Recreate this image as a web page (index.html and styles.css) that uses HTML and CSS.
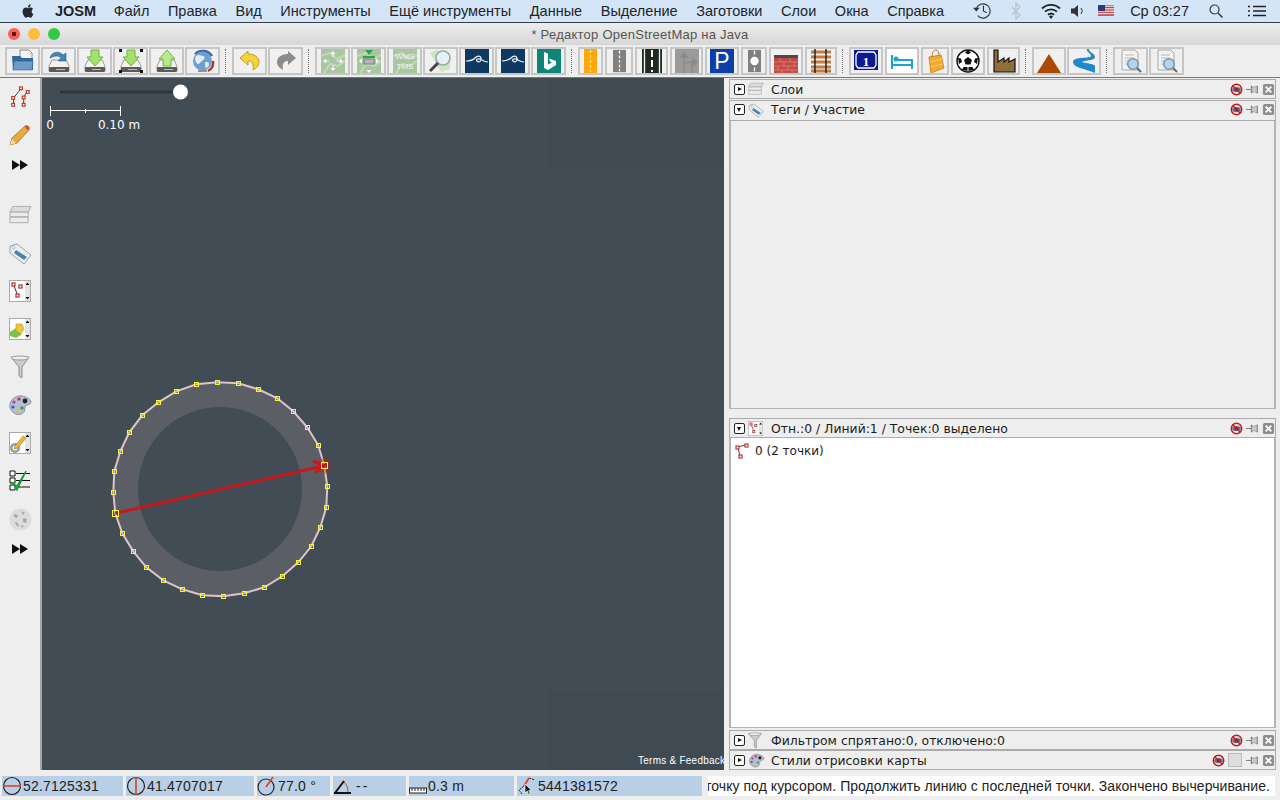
FILE: index.html
```html
<!DOCTYPE html>
<html lang="ru">
<head>
    <meta charset="UTF-8">
    <meta name="viewport" content="width=device-width, initial-scale=1.0">
    <title>JOSM</title>
    <link rel="stylesheet" href="styles.css">
</head>
<body>
    <svg class="defs" width="0" height="0">
        <symbol id="disk" viewBox="0 0 24 24">
            <path d="M5 11h14l3 6v5H2v-5z" fill="#f2f2f2" stroke="#9a9a9a"/>
            <rect x="2" y="18" width="20" height="5" rx="1" fill="#5a5a5a"/>
            <rect x="9" y="20" width="9" height="1" fill="#bbb"/>
        </symbol>
        <symbol id="ico-hide" viewBox="0 0 14 14">
            <circle cx="7" cy="7" r="5.6" fill="#ddd" stroke="#c8181c" stroke-width="1.6"/>
            <ellipse cx="7" cy="7" rx="4.5" ry="2.8" fill="#6a6a88"/>
            <circle cx="7" cy="7" r="1.6" fill="#2b2b50"/>
            <path d="M3 3l8 8" stroke="#c8181c" stroke-width="1.3"/>
        </symbol>
        <symbol id="ico-pin" viewBox="0 0 14 14">
            <path d="M0 7h6" stroke="#888" stroke-width="1.2"/>
            <path d="M6 3v8M12 3v8" stroke="#777" stroke-width="1.6"/>
            <path d="M6 5l6-1.5v7L6 9z" fill="#c9c9c9" stroke="#888" stroke-width=".6"/>
        </symbol>
        <symbol id="ico-close" viewBox="0 0 14 14">
            <rect x="1" y="1" width="12" height="12" rx="2" fill="#8e8e8e"/>
            <path d="M4 4l6 6M10 4l-6 6" stroke="#fff" stroke-width="2"/>
        </symbol>
        <symbol id="tiles" viewBox="0 0 24 24">
            <rect width="24" height="24" fill="#a8c69f"/>
            <path d="M0 7l9-3 7 6 8-4M3 24l6-9 8 2 7-5" stroke="#c4d8b8" fill="none" stroke-width="2"/>
        </symbol>
        <symbol id="way-icon" viewBox="0 0 24 24">
            <path d="M5 13L13 3M5 13v7M16 12l4-6M16 12v7" stroke="#333" stroke-width="1"/>
            <g fill="#fff" stroke="#c2382e" stroke-width="1.3">
                <rect x="11.5" y="1" width="3" height="3"/>
                <rect x="19" y="5" width="3" height="3"/>
                <rect x="3" y="11.5" width="3" height="3"/>
                <rect x="14.5" y="11" width="3" height="3"/>
                <rect x="3" y="19" width="3" height="3"/>
                <rect x="14.5" y="19" width="3" height="3"/>
            </g>
        </symbol>
        <symbol id="ff" viewBox="0 0 16 10">
            <path d="M0 0l8 5-8 5zM8 0l8 5-8 5z" fill="#111"/>
        </symbol>
        <symbol id="funnel" viewBox="0 0 20 24">
            <path d="M1 2h18l-7 10v11l-3-2v-9z" fill="#c8ccd0" stroke="#8e9297"/>
            <ellipse cx="10" cy="3" rx="9" ry="2" fill="#eee" stroke="#999"/>
        </symbol>
        <symbol id="palette" viewBox="0 0 24 22">
            <path d="M2 13C1 6 8 1 14 2c4 1 9 3 9 6s-5 2-6 5 1 5-4 7-10-2-11-7z" fill="#b7bdd4" stroke="#8a8fa8"/>
            <circle cx="17" cy="7" r="2.4" fill="#222"/>
            <circle cx="11" cy="5" r="1.6" fill="#b8322c"/>
            <circle cx="6" cy="8" r="1.6" fill="#a14c9c"/>
            <circle cx="5" cy="13" r="1.6" fill="#3160b5"/>
            <circle cx="9" cy="17" r="1.6" fill="#dcc43a"/>
            <circle cx="14" cy="14" r="1.7" fill="#3e9a45"/>
        </symbol>
        <symbol id="tag" viewBox="0 0 24 24">
            <path d="M2 5l7-2 14 11-7 9L2 12z" fill="#e8edf0" stroke="#9aa4ac"/>
            <path d="M8 9l11 7-3 3-10-7z" fill="#4f7fb0"/>
            <circle cx="5.5" cy="6.5" r="1.3" fill="#fff" stroke="#888" stroke-width=".6"/>
        </symbol>
        <symbol id="layers" viewBox="0 0 24 20">
            <path d="M4 1h19l-3 6H1z" fill="#dcdcdc" stroke="#aaa"/>
            <path d="M1 7h19v5H1zM1 12h19v6H1z" fill="#ececec" stroke="#aaa"/>
        </symbol>
        <symbol id="scroll-box" viewBox="0 0 22 22">
            <rect x=".5" y=".5" width="21" height="21" fill="#fff" stroke="#aaa"/>
            <rect x="16" y="1" width="5" height="20" fill="#e4e4e4"/>
            <path d="M18.5 2.5l2 2.5h-4zM18.5 19.5l2-2.5h-4z" fill="#111"/>
        </symbol>
        <symbol id="doc-search" viewBox="0 0 24 24">
            <path d="M3 1h13l3 3v17H3z" fill="#f2f2f2" stroke="#a8a8a8"/>
            <path d="M6 6h9M6 9h9M6 12h6M6 15h4" stroke="#bbb"/>
            <circle cx="14" cy="15" r="5.3" fill="#b5d3ea" stroke="#7d96ab" stroke-width="1.6"/>
            <path d="M18 19l4 4" stroke="#6c6c6c" stroke-width="2.2"/>
        </symbol>
    </svg>

    <header class="menubar">
        <svg class="apple" viewBox="0 0 24 24" width="16" height="16"><path d="M18.71 19.5c-.83 1.24-1.71 2.45-3.05 2.47-1.34.03-1.77-.79-3.29-.79-1.53 0-2 .77-3.27.82-1.31.05-2.3-1.32-3.14-2.53C4.25 17 2.94 12.45 4.7 9.39c.87-1.52 2.43-2.48 4.12-2.51 1.28-.02 2.5.87 3.29.87.78 0 2.26-1.07 3.81-.91.65.03 2.47.26 3.64 1.98-.09.06-2.17 1.28-2.15 3.81.03 3.02 2.65 4.03 2.68 4.04-.03.07-.42 1.44-1.38 2.83M13 3.5c.73-.83 1.94-1.46 2.94-1.5.13 1.17-.34 2.35-1.04 3.19-.69.85-1.83 1.51-2.95 1.42-.15-1.15.41-2.35 1.05-3.11z" fill="#22282d"/></svg>
        <nav class="menu">
            <span class="menu-app">JOSM</span>
            <span>Файл</span>
            <span>Правка</span>
            <span>Вид</span>
            <span>Инструменты</span>
            <span>Ещё инструменты</span>
            <span>Данные</span>
            <span>Выделение</span>
            <span>Заготовки</span>
            <span>Слои</span>
            <span>Окна</span>
            <span>Справка</span>
        </nav>
        <div class="tray">
            <svg class="tray-clock" viewBox="0 0 20 20" width="19" height="19"><path d="M3.5 8A7.5 7.5 0 1 1 5 15.5" fill="none" stroke="#333" stroke-width="1.2"/><path d="M0 7l3.5 4L7 7z" fill="#333"/><path d="M11 5v5.5l3.5 2" fill="none" stroke="#333" stroke-width="1.2"/></svg>
            <svg class="tray-bt" viewBox="0 0 10 18" width="10" height="18"><path d="M1 5l8 8-4 4V1l4 4-8 8" fill="none" stroke="#b9c4cd" stroke-width="1.3"/></svg>
            <svg class="tray-wifi" viewBox="0 0 20 16" width="20" height="16"><path d="M1 5.5a13 13 0 0 1 18 0M4 8.7a9 9 0 0 1 12 0M7 11.8a4.6 4.6 0 0 1 6 0" fill="none" stroke="#222" stroke-width="1.8"/><path d="M10 16l-2-2.6a3 3 0 0 1 4 0z" fill="#222"/></svg>
            <svg class="tray-vol" viewBox="0 0 14 14" width="14" height="14"><path d="M0 4.500h3l4-3.500v12l-4-3.500H0z" fill="#333"/><path d="M10 4a4.500 4.500 0 0 1 0 6" fill="none" stroke="#333"/></svg>
            <svg class="tray-flag" viewBox="0 0 16 11" width="16" height="11"><rect width="16" height="11" fill="#fff"/><path d="M0 .8h16M0 2.500h16M0 4.200h16M0 5.900h16M0 7.600h16M0 9.300h16M0 10.600h16" stroke="#b5323c" stroke-width=".9"/><rect width="7" height="6" fill="#2c3a7c"/></svg>
            <span class="tray-clocktext">Ср 03:27</span>
            <svg class="tray-search" viewBox="0 0 14 14" width="14" height="14"><circle cx="5.500" cy="5.500" r="4.500" fill="none" stroke="#333" stroke-width="1.2"/><path d="M9 9l4.500 4.500" stroke="#333" stroke-width="1.400"/></svg>
            <svg class="tray-list" viewBox="0 0 18 12" width="18" height="12"><path d="M5 1.500h13M5 6h13M5 10.500h13M0 1.500h2M0 6h2M0 10.500h2" stroke="#222" stroke-width="1.600"/></svg>
        </div>
    </header>

    <div class="window">
        <div class="titlebar">
            <div class="lights">
                <span class="light light-close"></span>
                <span class="light light-min"></span>
                <span class="light light-max"></span>
            </div>
            <span class="title-text">* Редактор OpenStreetMap на Java</span>
        </div>

        <div class="toolbar">
            <div class="tb-group">
                <div class="tb"><svg viewBox="0 0 24 24"><path d="M9 1h9l3 3v9H9z" fill="#f4f4f4" stroke="#888"/><path d="M1 7h8l2 2h11v12H2z" fill="#34679c"/><path d="M3 12h19l-1 9H2z" fill="#6d9bca" stroke="#2f5b8a" stroke-width=".6"/></svg></div>
                <div class="tb"><svg viewBox="0 0 24 24"><use href="#disk"/><path d="M3 9c1-6 9-8 13-3l3-2v8h-8l3-3c-3-3-7-2-11 0z" fill="#3f85bb" stroke="#2c5f8c" stroke-width=".6"/></svg></div>
                <div class="tb"><svg viewBox="0 0 24 24"><use href="#disk"/><path d="M8 1h8v7h4l-8 9-8-9h4z" fill="#a4e06c" stroke="#6fb53c"/></svg></div>
                <div class="tb"><svg viewBox="0 0 24 24"><use href="#disk"/><path d="M8 1h8v7h4l-8 9-8-9h4z" fill="#a4e06c" stroke="#6fb53c"/><path d="M0 0h3v3H0zM21 0h3v3h-3zM0 21h3v3H0zM21 21h3v3h-3z" fill="#111"/></svg></div>
                <div class="tb"><svg viewBox="0 0 24 24"><use href="#disk"/><path d="M8 17h8v-7h4l-8-9-8 9h4z" fill="#b8e890" stroke="#6fb53c"/></svg></div>
                <div class="tb"><svg viewBox="0 0 24 24"><path d="M4 5a11 11 0 0 1 17 2" fill="none" stroke="#3a64a8" stroke-width="2.400"/><path d="M22 12a10 10 0 0 1-5 10" fill="none" stroke="#bb2c2a" stroke-width="2.400"/><circle cx="11.500" cy="12" r="9.500" fill="#6f9fd2"/><path d="M5 7c3-2 5 0 7 0s2 3 0 4-3 4-5 4-4-6-2-8zM14 13c2 0 4 0 4 2s-2 4-3 4-1-6-1-6z" fill="#e4edf5"/><path d="M7 22h9" stroke="#777" stroke-width="1.500"/></svg></div>
            </div>
            <span class="tb-sep"></span>
            <div class="tb-group">
                <div class="tb"><svg viewBox="0 0 24 24"><path d="M10 2L2 9l8 7v-4c4 0 6 2 5 9 4-2 6-5 6-8 0-5-5-8-11-8z" fill="#f3d23c" stroke="#c49b1c"/></svg></div>
                <div class="tb"><svg viewBox="0 0 24 24"><path d="M14 2l8 7-8 7v-4c-4 0-6 2-5 9-4-2-6-5-6-8 0-5 5-8 11-8z" fill="#8c8c8c"/></svg></div>
            </div>
            <span class="tb-sep"></span>
            <div class="tb-group">
                <div class="tb"><svg viewBox="0 0 24 24"><use href="#tiles"/><path d="M12 2l2.500 3h-5zM12 22l2.500-3h-5zM2 12l3-2.500v5zM22 12l-3-2.500v5z" fill="#fff"/><path d="M12 5v3M12 16v3M5 12h3M16 12h3" stroke="#fff"/></svg></div>
                <div class="tb"><svg viewBox="0 0 24 24"><use href="#tiles"/><path d="M2 12l3-2.500v5zM22 12l-3-2.500v5zM12 24l2.500-3h-5z" fill="#fff"/><path d="M8 1h8l-4 5z" fill="#2ea44a"/><rect x="6" y="7" width="12" height="2" fill="#2ea44a"/><rect x="7" y="10" width="10" height="5" fill="#b5b5c0" stroke="#555" stroke-width=".6"/></svg></div>
                <div class="tb"><svg viewBox="0 0 24 24"><use href="#tiles"/><text class="tb-wms" x="12" y="10">WMS</text><text class="tb-wms" x="12" y="20">TMS</text></svg></div>
                <div class="tb"><svg viewBox="0 0 24 24"><path d="M1 4l6-3 14 3v16l-9 3z" fill="#cfe3c0"/><circle cx="14" cy="9" r="7" fill="#e6f0f5" stroke="#9aa" stroke-width="1.600"/><path d="M9 14l-8 8" stroke="#444" stroke-width="3"/></svg></div>
                <div class="tb"><svg viewBox="0 0 24 24"><rect width="24" height="24" fill="#0e3a62"/><path d="M1 12c4 0 7-1 9-3s5-3 6 0-2 5-4 3 2-3 5-1 4 2 6 2" fill="none" stroke="#f2f2f2" stroke-width="1.200"/></svg></div>
                <div class="tb"><svg viewBox="0 0 24 24"><rect width="24" height="24" fill="#0e3a62"/><path d="M1 12c4 0 7-1 9-3s5-3 6 0-2 5-4 3 2-3 5-1 4 2 6 2" fill="none" stroke="#f2f2f2" stroke-width="1.200"/></svg></div>
                <div class="tb"><svg viewBox="0 0 24 24"><rect width="24" height="24" fill="#0f8578"/><path d="M7 3l4 1.500v11l4-2-2-1-1-3 7 2.500v4L11 21l-4-2z" fill="#fff"/></svg></div>
            </div>
            <span class="tb-sep"></span>
            <div class="tb-group tb-group-wide">
                <div class="tb tb-w25"><svg viewBox="0 0 13 24" class="ico-n"><rect width="13" height="24" fill="#fca70c"/><path d="M6.500 1v22" stroke="#fbe26a" stroke-width="1.400" stroke-dasharray="3 2"/></svg></div>
                <div class="tb tb-w28"><svg viewBox="0 0 14 24" class="ico-n"><rect width="14" height="24" fill="#808080"/><path d="M7 1v22" stroke="#fff" stroke-width="1.400" stroke-dasharray="3 2"/></svg></div>
                <div class="tb tb-w33"><svg viewBox="0 0 22 24" class="ico-w"><rect width="22" height="24" fill="#f4f4f4"/><rect x="1" width="20" height="24" fill="#1f2b22"/><path d="M3.500 0v24M18.500 0v24" stroke="#f4f4f4" stroke-width="1.300"/><path d="M11 1v22" stroke="#fff" stroke-width="2" stroke-dasharray="7 3"/></svg></div>
                <div class="tb tb-w33"><svg viewBox="0 0 24 24"><rect width="24" height="24" fill="#9b9b9b"/><path d="M9 24V5M17 24V13M9 15c0-2 4-2 8-2M6 8l3-4 3 4zM18 10l4 3-4 3z" stroke="#8a8a8a" stroke-width="1.500" fill="#8a8a8a"/></svg></div>
                <div class="tb tb-w34"><svg viewBox="0 0 24 24"><rect width="24" height="24" fill="#0b3ea6"/><text class="tb-parking" x="12" y="20">P</text></svg></div>
                <div class="tb tb-w26"><svg viewBox="0 0 14 24" class="ico-n"><rect width="14" height="24" fill="#808080"/><circle cx="7" cy="12" r="4.500" fill="#fff"/><path d="M7 1v4M7 19v4" stroke="#fff" stroke-width="1.400"/></svg></div>
                <div class="tb tb-w34"><svg viewBox="0 0 24 24"><rect y="6" width="24" height="3" fill="#4b4b4b"/><rect y="9" width="24" height="15" fill="#c24a44"/><path d="M0 13h24M0 17h24M0 21h24M6 9v4M16 9v4M10 13v4M20 13v4M4 17v4M14 17v4M8 21v3M18 21v3" stroke="#e2938b" stroke-width=".6"/></svg></div>
                <div class="tb tb-w32"><svg viewBox="0 0 22 24" class="ico-w"><path d="M1 3h20M1 8h20M1 13h20M1 18h20M1 22h20" stroke="#c27c42" stroke-width="2.800"/><path d="M5 0v24M16 0v24" stroke="#111" stroke-width="1.300"/></svg></div>
            </div>
            <span class="tb-sep"></span>
            <div class="tb-group tb-group-wide">
                <div class="tb tb-w34"><svg viewBox="0 0 24 24"><rect y="1" width="24" height="20" fill="#0b1a8c"/><path d="M4 3h16l2 3v10l-2 3H4l-2-3V6z" fill="none" stroke="#fff" stroke-width="1.300"/><text class="tb-one" x="12" y="16.500">1</text></svg></div>
                <div class="tb tb-w34 tb-white"><svg viewBox="0 0 24 24"><path d="M2 6v14M22 10v10M2 16h20M7 11h15v5H2" fill="none" stroke="#1e9fd6" stroke-width="2"/><circle cx="6" cy="10" r="2.500" fill="#1e9fd6"/></svg></div>
                <div class="tb tb-w28"><svg viewBox="0 0 18 24" class="ico-w"><path d="M3 8l12-2 3 13-13 5z" fill="#f3a82f" stroke="#d88a1a"/><path d="M4 13l12-3M5 18l12-3" stroke="#ffd06a"/><path d="M6 8c0-9 7-9 7-2" fill="none" stroke="#a57838"/></svg></div>
                <div class="tb tb-w34"><svg viewBox="0 0 24 24"><circle cx="12" cy="12" r="11" fill="#fff" stroke="#111" stroke-width="1.400"/><path d="M12 8l4 3-1.500 4.500h-5L8 11zM12 1l3 2.500-3 2-3-2zM2 9l3 .5 1 3.500-3 2zM22 9l-3 .5-1 3.500 3 2zM6 21l1.500-3h4v4zM18 21l-1.500-3h-4v4z" fill="#111"/></svg></div>
                <div class="tb tb-w33"><svg viewBox="0 0 24 24"><path d="M2 1h4v12l6-4v4l5-4v4l6-3v13H2z" fill="#8e6f3c" stroke="#111" stroke-width="1.200"/></svg></div>
            </div>
            <span class="tb-sep"></span>
            <div class="tb-group">
                <div class="tb tb-w34"><svg viewBox="0 0 24 24"><path d="M12 5l12 19H0z" fill="#ab4a04"/></svg></div>
                <div class="tb tb-w34"><svg viewBox="0 0 24 24"><path d="M15 0h2c-1 3 6 4 6 8s-11 3-13 5c3 1 13 2 13 4v7C15 20 1 19 1 13S19 10 19 7s-5-4-4-7z" fill="#2388c9"/></svg></div>
            </div>
            <span class="tb-sep"></span>
            <div class="tb-group">
                <div class="tb"><svg viewBox="0 0 24 24"><use href="#doc-search"/></svg></div>
                <div class="tb"><svg viewBox="0 0 24 24"><use href="#doc-search"/></svg></div>
            </div>
        </div>

        <div class="workspace">
            <aside class="sidebar">
                <div class="side-btn"><svg width="22" height="24" viewBox="0 0 24 24"><use href="#way-icon"/></svg></div>
                <div class="side-btn"><svg width="22" height="22" viewBox="0 0 22 22"><path d="M1 21l2-7L16 2c3-1 5 1 4 4L8 19z" fill="#e9a93b" stroke="#a96f20" stroke-width=".8"/><path d="M16 2c3-1 5 1 4 4l-3-1z" fill="#c8504a"/><path d="M1 21l2-6 4 4z" fill="#f1d9b0"/></svg></div>
                <div class="side-btn side-more"><svg width="16" height="10"><use href="#ff"/></svg></div>
                <div class="side-btn side-gap"><svg width="23" height="20" viewBox="0 0 24 20"><use href="#layers"/></svg></div>
                <div class="side-btn"><svg width="24" height="24" viewBox="0 0 24 24"><use href="#tag"/></svg></div>
                <div class="side-btn"><svg width="22" height="22" viewBox="0 0 22 22"><use href="#scroll-box"/><path d="M5 6l4 10" stroke="#333"/><g fill="#fff" stroke="#c2382e" stroke-width="1.300"><rect x="3" y="3" width="3" height="3"/><rect x="10" y="5" width="3" height="3"/><rect x="7" y="14" width="3" height="3"/></g></svg></div>
                <div class="side-btn"><svg width="22" height="22" viewBox="0 0 22 22"><use href="#scroll-box"/><path d="M1 14l6-4 2 3 3-1v5l-5 3-6-2z" fill="#7cc24d"/><path d="M7 6h6l2 5-3 5-5-3z" fill="#e9c83c" stroke="#b39a22" stroke-width=".6"/></svg></div>
                <div class="side-btn"><svg width="20" height="24" viewBox="0 0 20 24"><use href="#funnel"/></svg></div>
                <div class="side-btn"><svg width="24" height="22" viewBox="0 0 24 22"><use href="#palette"/></svg></div>
                <div class="side-btn"><svg width="22" height="22" viewBox="0 0 22 22"><use href="#scroll-box"/><circle cx="6" cy="16" r="5" fill="#999"/><circle cx="6" cy="16" r="2.500" fill="#fff"/><path d="M6 14l8-10 3 2-8 10-4 1z" fill="#edb53a" stroke="#a97a20" stroke-width=".6"/></svg></div>
                <div class="side-btn"><svg width="22" height="22" viewBox="0 0 22 22"><path d="M1 1h5v5H1zM1 8h5v5H1zM1 15h5v5H1z" fill="#fff" stroke="#111"/><path d="M7 3.500h14M7 10.500h14M7 17h14" stroke="#111"/><path d="M2 12l4 4 2 4 9-19-9 15z" fill="#1fc04a" stroke="#149a38" stroke-width="1.400"/></svg></div>
                <div class="side-btn"><svg width="23" height="23" viewBox="0 0 23 23"><circle cx="11.500" cy="11.500" r="11" fill="#dcdcdc"/><path d="M5 6l4 1-1 3-3-1zM12 3l4 2-2 2zM14 10l4 1-1 4-3-1zM6 14l3 1 1 4-3-2zM12 17l3 1-2 2z" fill="#a8a8a8"/></svg></div>
                <div class="side-btn side-more"><svg width="16" height="10"><use href="#ff"/></svg></div>
            </aside>

            <main class="map">
                <svg class="map-canvas" width="682" height="692" viewBox="42 78 682 692">
                    <rect class="map-tile" x="548" y="78" width="176" height="90"/>
                    <rect class="map-tile" x="548" y="690" width="176" height="80"/>

                    <path d="M60 92H180" stroke="#2f373d" stroke-width="3"/>
                    <circle cx="180.500" cy="92" r="7.500" fill="#fff"/>
                    <path d="M50.500 106v10M120.500 106v10M85.500 109v4M50 110.500h71" stroke="#fff" fill="none"/>
                    <text class="map-scale" x="50" y="129" text-anchor="middle">0</text>
                    <text class="map-scale" x="119" y="129" text-anchor="middle">0.10 m</text>

                    <circle cx="220" cy="489.500" r="107" fill="#5c5e66"/>
                    <circle cx="220" cy="489" r="82" fill="#414c55"/>
                    <polygon class="way-outline" points="217.300,382.300 238.300,383.300 258.300,389.300 277.300,398.300 293.300,411.300 307.300,427.300 318.300,445.300 324.300,465.700 327.300,486.300 326.300,507.300 320.300,527.300 311.300,546.300 298.300,562.300 282.300,576.300 264.300,587.300 244.300,593.300 223.300,596.300 202.300,595.300 182.300,589.300 163.300,580.300 146.300,567.300 133.300,551.300 122.300,533.300 115.300,513.300 113.300,492.300 114.300,471.300 120.300,451.300 129.300,432.300 142.300,415.300 158.300,402.300 176.300,391.300 196.300,384.300"/>

                    <circle cx="324.300" cy="465.700" r="8" fill="#c8171d" opacity=".35"/>
                    <path class="way-selected" d="M115.300 513.300L324.300 465.700M313 461l11.300 4.700-9 7"/>

                    <g class="nodes" transform="translate(.5 .5)">
                        <rect x="215" y="380" width="4" height="4"/><rect x="236" y="381" width="4" height="4"/><rect x="256" y="387" width="4" height="4"/><rect x="275" y="396" width="4" height="4"/><rect x="291" y="409" width="4" height="4"/><rect x="305" y="425" width="4" height="4"/><rect x="316" y="443" width="4" height="4"/><rect x="325" y="484" width="4" height="4"/><rect x="324" y="505" width="4" height="4"/><rect x="318" y="525" width="4" height="4"/><rect x="309" y="544" width="4" height="4"/><rect x="296" y="560" width="4" height="4"/><rect x="280" y="574" width="4" height="4"/><rect x="262" y="585" width="4" height="4"/><rect x="242" y="591" width="4" height="4"/><rect x="221" y="594" width="4" height="4"/><rect x="200" y="593" width="4" height="4"/><rect x="180" y="587" width="4" height="4"/><rect x="161" y="578" width="4" height="4"/><rect x="144" y="565" width="4" height="4"/><rect x="131" y="549" width="4" height="4"/><rect x="120" y="531" width="4" height="4"/><rect x="111" y="490" width="4" height="4"/><rect x="112" y="469" width="4" height="4"/><rect x="118" y="449" width="4" height="4"/><rect x="127" y="430" width="4" height="4"/><rect x="140" y="413" width="4" height="4"/><rect x="156" y="400" width="4" height="4"/><rect x="174" y="389" width="4" height="4"/><rect x="194" y="382" width="4" height="4"/>
                        <rect x="321" y="462" width="6" height="6"/><rect x="112" y="510" width="6" height="6"/>
                    </g>

                    <text class="map-terms" x="638" y="764">Terms &amp; Feedback</text>
                </svg>
            </main>

            <section class="panels">
                <div class="panel-head panel-layers">
                    <span class="toggle toggle-closed"></span>
                    <svg class="head-icon" width="16" height="14" viewBox="0 0 24 20"><use href="#layers"/></svg>
                    <span class="head-text">Слои</span>
                    <span class="head-tools"><svg><use href="#ico-hide"/></svg><svg><use href="#ico-pin"/></svg><svg><use href="#ico-close"/></svg></span>
                </div>

                <div class="panel panel-tags">
                    <div class="panel-head">
                        <span class="toggle toggle-open"></span>
                        <svg class="head-icon" width="16" height="16" viewBox="0 0 24 24"><use href="#tag"/></svg>
                        <span class="head-text">Теги / Участие</span>
                        <span class="head-tools"><svg><use href="#ico-hide"/></svg><svg><use href="#ico-pin"/></svg><svg><use href="#ico-close"/></svg></span>
                    </div>
                    <div class="panel-body"></div>
                </div>

                <div class="panel panel-selection">
                    <div class="panel-head">
                        <span class="toggle toggle-open"></span>
                        <svg class="head-icon" width="15" height="15" viewBox="0 0 22 22"><use href="#scroll-box"/><path d="M5 6l4 10" stroke="#333"/><g fill="#fff" stroke="#c2382e" stroke-width="1.300"><rect x="3" y="3" width="3" height="3"/><rect x="10" y="5" width="3" height="3"/><rect x="7" y="14" width="3" height="3"/></g></svg>
                        <span class="head-text">Отн.:0 / Линий:1 / Точек:0 выделено</span>
                        <span class="head-tools"><svg><use href="#ico-hide"/></svg><svg><use href="#ico-pin"/></svg><svg><use href="#ico-close"/></svg></span>
                    </div>
                    <div class="panel-body panel-body-white">
                        <div class="sel-item">
                            <svg width="14" height="16" viewBox="0 0 14 16"><path d="M3 4l7-2M3 4l2 10" stroke="#444"/><g fill="#fff" stroke="#c2382e" stroke-width="1.200"><rect x="1" y="3" width="3" height="3"/><rect x="10" y="1" width="3" height="3"/><rect x="4" y="12" width="3" height="3"/></g></svg>
                            <span>0 (2 точки)</span>
                        </div>
                    </div>
                </div>

                <div class="panel-head panel-filter">
                    <span class="toggle toggle-closed"></span>
                    <svg class="head-icon" width="14" height="17" viewBox="0 0 20 24"><use href="#funnel"/></svg>
                    <span class="head-text">Фильтром спрятано:0, отключено:0</span>
                    <span class="head-tools"><svg><use href="#ico-hide"/></svg><svg><use href="#ico-pin"/></svg><svg><use href="#ico-close"/></svg></span>
                </div>
                <div class="panel-head panel-styles">
                    <span class="toggle toggle-closed"></span>
                    <svg class="head-icon" width="17" height="15" viewBox="0 0 24 22"><use href="#palette"/></svg>
                    <span class="head-text">Стили отрисовки карты</span>
                    <span class="head-tools"><svg><use href="#ico-hide"/></svg><span class="tool-box"></span><svg><use href="#ico-pin"/></svg><svg><use href="#ico-close"/></svg></span>
                </div>
            </section>
        </div>

        <footer class="statusbar">
            <div class="cell cell-lat">
                <svg width="20" height="20" viewBox="0 0 20 20"><circle cx="10" cy="10" r="8.500" fill="none" stroke="#222" stroke-width="1.200"/><path d="M1 10h18" stroke="#d8402e" stroke-width="1.600"/></svg>
                <span>52.7125331</span>
            </div>
            <div class="cell cell-lon">
                <svg width="20" height="20" viewBox="0 0 20 20"><circle cx="10" cy="10" r="8.500" fill="none" stroke="#222" stroke-width="1.200"/><path d="M10 1v18" stroke="#d8402e" stroke-width="1.600"/></svg>
                <span>41.4707017</span>
            </div>
            <div class="cell cell-head">
                <svg width="20" height="20" viewBox="0 0 20 20"><circle cx="9" cy="11" r="8" fill="none" stroke="#222" stroke-width="1.200"/><path d="M9 11l7-10" stroke="#d8402e" stroke-width="1.600"/></svg>
                <span>77.0 °</span>
            </div>
            <div class="cell cell-angle">
                <svg width="20" height="20" viewBox="0 0 20 20"><path d="M2 17L11 5M1 17h17" stroke="#111" stroke-width="2" fill="none"/><path d="M11 6c3 3 4 6 4 10" stroke="#d8402e" fill="none"/></svg>
                <span class="angle-value">--</span>
            </div>
            <div class="cell cell-dist">
                <svg width="18" height="20" viewBox="0 0 18 20"><rect x=".5" y="12" width="17" height="5" fill="#fff" stroke="#222"/><path d="M3 12v3M6 12v3M9 12v3M12 12v3M15 12v3" stroke="#222"/></svg>
                <span>0.3 m</span>
            </div>
            <div class="cell cell-way">
                <svg width="20" height="20" viewBox="0 0 20 20"><path d="M5 18l-3-4 5-4 5-8 6 2" fill="none" stroke="#222" stroke-dasharray="2 1"/><path d="M7 10l5-8" stroke="#d8402e" stroke-width="1.600"/><path d="M8 8v9l2.300-2 1.400 3.500 1.500-.7-1.500-3.300h3z" fill="#111" stroke="#fff" stroke-width=".7"/></svg>
                <span>5441381572</span>
            </div>
            <div class="cell-message"><span>точку под курсором. Продолжить линию с последней точки. Закончено вычерчивание.</span></div>
        </footer>
    </div>
</body>
</html>
```

FILE: styles.css
```css
* {
    box-sizing: border-box;
}

html, body {
    height: 100%;
}

body {
    margin: 0;
    display: flex;
    flex-direction: column;
    height: 800px;
    overflow: hidden;
    background: #eeeeee;
    color: #1c1c1c;
    font-family: "Liberation Sans", Arial, sans-serif;
}

.defs {
    display: block;
    height: 0;
}

/* mac menu bar */
.menubar {
    display: flex;
    align-items: center;
    flex: 0 0 23px;
    padding: 0 14px 1px 20px;
    background: #d3e5f6;
    border-bottom: 1px solid #2e3f50;
    font-size: 14.5px;
}

.apple {
    flex: none;
}

.menu {
    display: flex;
    gap: 18.6px;
    margin-left: 19px;
    color: #1e2428;
}

.menu-app {
    margin-right: -1px;
    font-weight: bold;
}

.tray {
    display: flex;
    align-items: center;
    margin-left: auto;
    color: #1e2428;
}

.tray-bt {
    margin-left: 19px;
}

.tray-wifi {
    margin-left: 20px;
}

.tray-vol {
    margin-left: 10px;
}

.tray-flag {
    margin-left: 13px;
}

.tray-clocktext {
    margin-left: 16px;
}

.tray-search {
    margin-left: 20px;
}

.tray-list {
    margin-left: 25px;
}

/* window chrome */
.window {
    display: flex;
    flex-direction: column;
    flex: 1;
    min-height: 0;
}

.titlebar {
    position: relative;
    display: flex;
    align-items: center;
    justify-content: center;
    flex: 0 0 22px;
    background: linear-gradient(#ededed, #d7d7d7);
}

.lights {
    position: absolute;
    left: 8px;
    top: 5px;
    display: flex;
    gap: 8px;
}

.light {
    display: block;
    width: 12px;
    height: 12px;
    border-radius: 50%;
}

.light-close {
    background: radial-gradient(circle, #5b1210 0 2px, #fc5f57 2.5px);
}

.light-min {
    background: #fdbc40;
}

.light-max {
    background: #33c748;
}

.title-text {
    font-size: 13px;
    color: #555555;
    letter-spacing: .25px;
}

/* toolbar */
.toolbar {
    display: flex;
    align-items: flex-start;
    flex: 0 0 33px;
    padding: 2px 0 0 5px;
    background: #eeeeee;
    border-bottom: 1px solid #777777;
}

.tb-group {
    display: flex;
    gap: 1px;
}

.tb-group-wide {
    gap: 2px;
}

.tb {
    display: flex;
    align-items: center;
    justify-content: center;
    width: 35px;
    height: 28px;
    background: #f0f0f0;
    border: 2px solid #c6c6c6;
}

.tb svg {
    display: block;
    width: 24px;
    height: 24px;
}

.tb svg.ico-n {
    width: 13px;
}

.tb svg.ico-w {
    width: 22px;
}

.tb-w25 { width: 25px; }
.tb-w26 { width: 26px; }
.tb-w28 { width: 28px; }
.tb-w32 { width: 32px; }
.tb-w33 { width: 33px; }
.tb-w34 { width: 34px; }

.tb-white {
    background: #ffffff;
}

.tb-sep {
    width: 1px;
    height: 24px;
    margin: 2px 6px 0 5px;
    border-left: 1px dotted #777777;
}

.tb-wms {
    font-size: 8px;
    fill: #f4f7ee;
    text-anchor: middle;
}

.tb-parking {
    font-size: 23px;
    fill: #ffffff;
    text-anchor: middle;
}

.tb-one {
    font-size: 13px;
    font-weight: bold;
    fill: #ffffff;
    text-anchor: middle;
    font-family: "Liberation Serif", serif;
}

/* main area */
.workspace {
    display: flex;
    flex: 0 0 692px;
}

.sidebar {
    display: flex;
    flex-direction: column;
    flex: 0 0 42px;
    border-right: 2px solid #a6a6a6;
}

.side-btn {
    display: flex;
    align-items: center;
    justify-content: center;
    height: 38px;
}

.side-more {
    height: 22px;
}

.side-gap {
    margin-top: 20px;
}

.map {
    flex: 0 0 682px;
    height: 692px;
    background: #414c55;
    overflow: hidden;
}

.map-canvas {
    display: block;
}

.map-tile {
    fill: #3f4a53;
}

.map-scale {
    font-family: "DejaVu Sans", sans-serif;
    font-size: 12px;
    fill: #ffffff;
}

.map-terms {
    font-family: "Liberation Sans", sans-serif;
    font-size: 10px;
    letter-spacing: .25px;
    fill: #ffffff;
}

.way-outline {
    fill: none;
    stroke: #dcc4c8;
    stroke-width: 2;
}

.way-selected {
    fill: none;
    stroke: #c8171d;
    stroke-width: 3;
}

.nodes rect {
    fill: none;
    stroke: #f6f63c;
    stroke-width: 1;
}

/* right side panels */
.panels {
    display: flex;
    flex-direction: column;
    flex: 1;
    min-width: 0;
    padding: 1px 4px 0 5px;
    font-family: "DejaVu Sans", sans-serif;
    font-size: 12.4px;
}

.panel {
    display: flex;
    flex-direction: column;
    flex: 1;
    min-height: 0;
}

.panel-tags {
    flex: 0 0 309px;
    margin-top: 1px;
}

.panel-selection {
    margin-top: 9px;
}

.panel-filter {
    margin-top: 2px;
}

.panel-tags .panel-head {
    height: 21px;
    padding-bottom: 2px;
}

.panel-layers,
.panel-filter,
.panel-styles {
    padding-top: 1px;
}

.panel-head {
    display: flex;
    align-items: center;
    flex: none;
    height: 20px;
    padding: 0 0 0 4px;
    background: #eeeeee;
    border: 1px solid #ababab;
    border-bottom-width: 1.5px;
}

.toggle {
    position: relative;
    flex: none;
    width: 11px;
    height: 11px;
    background: #ffffff;
    border: 1px solid #222222;
    border-radius: 2px;
}

.toggle::after {
    content: "";
    position: absolute;
    border-style: solid;
    border-color: transparent;
}

.toggle-closed::after {
    left: 3px;
    top: 2px;
    border-width: 2.5px 0 2.5px 4px;
    border-left-color: #111111;
}

.toggle-open::after {
    left: 2px;
    top: 3px;
    border-width: 4px 2.5px 0;
    border-top-color: #111111;
}

.head-icon {
    flex: none;
    margin-left: 3px;
}

.head-text {
    position: absolute;
    margin-left: 37px;
    white-space: nowrap;
}

.head-tools {
    display: flex;
    align-items: center;
    gap: 3px;
    margin-left: auto;
}

.head-tools svg {
    display: block;
    width: 13px;
    height: 13px;
}

.tool-box {
    width: 14px;
    height: 14px;
    margin-right: 1px;
    background: #dddddd;
    border: 1px solid #bbbbbb;
}

.panel-body {
    flex: 1;
    background: #eeeeee;
    border: 2px solid #b4b4b4;
    border-top: 0;
    border-bottom-width: 1px;
}

.panel-body-white {
    padding: 5px 2px;
    background: #ffffff;
    font-size: 12px;
}

.sel-item {
    display: flex;
    align-items: center;
    gap: 6px;
    padding-left: 2px;
}

.sel-item svg {
    display: block;
}

/* status bar */
.statusbar {
    display: flex;
    align-items: center;
    flex: 1;
    gap: 3px;
    padding: 2px 5px 0 2px;
    font-size: 14px;
    letter-spacing: .2px;
    color: #222222;
}

.cell {
    display: flex;
    align-items: center;
    gap: 1px;
    height: 20px;
    overflow: hidden;
    background: #b8cfe6;
}

.cell svg {
    flex: none;
}

.cell-lat { width: 121px; }
.cell-lon { width: 128px; }
.cell-head { width: 73px; }
.cell-angle { width: 73px; }
.cell-dist { width: 105px; }
.cell-way { width: 185px; }

.angle-value {
    margin-left: 2px;
    letter-spacing: 2px;
}

.cell-message {
    display: flex;
    justify-content: flex-end;
    align-items: center;
    flex: 1;
    min-width: 0;
    height: 20px;
    margin-left: 3px;
    padding-right: 5px;
    overflow: hidden;
    background: #ffffff;
    font-size: 14px;
    letter-spacing: .05px;
    white-space: nowrap;
}

.cell-message span {
    flex: none;
}
```
